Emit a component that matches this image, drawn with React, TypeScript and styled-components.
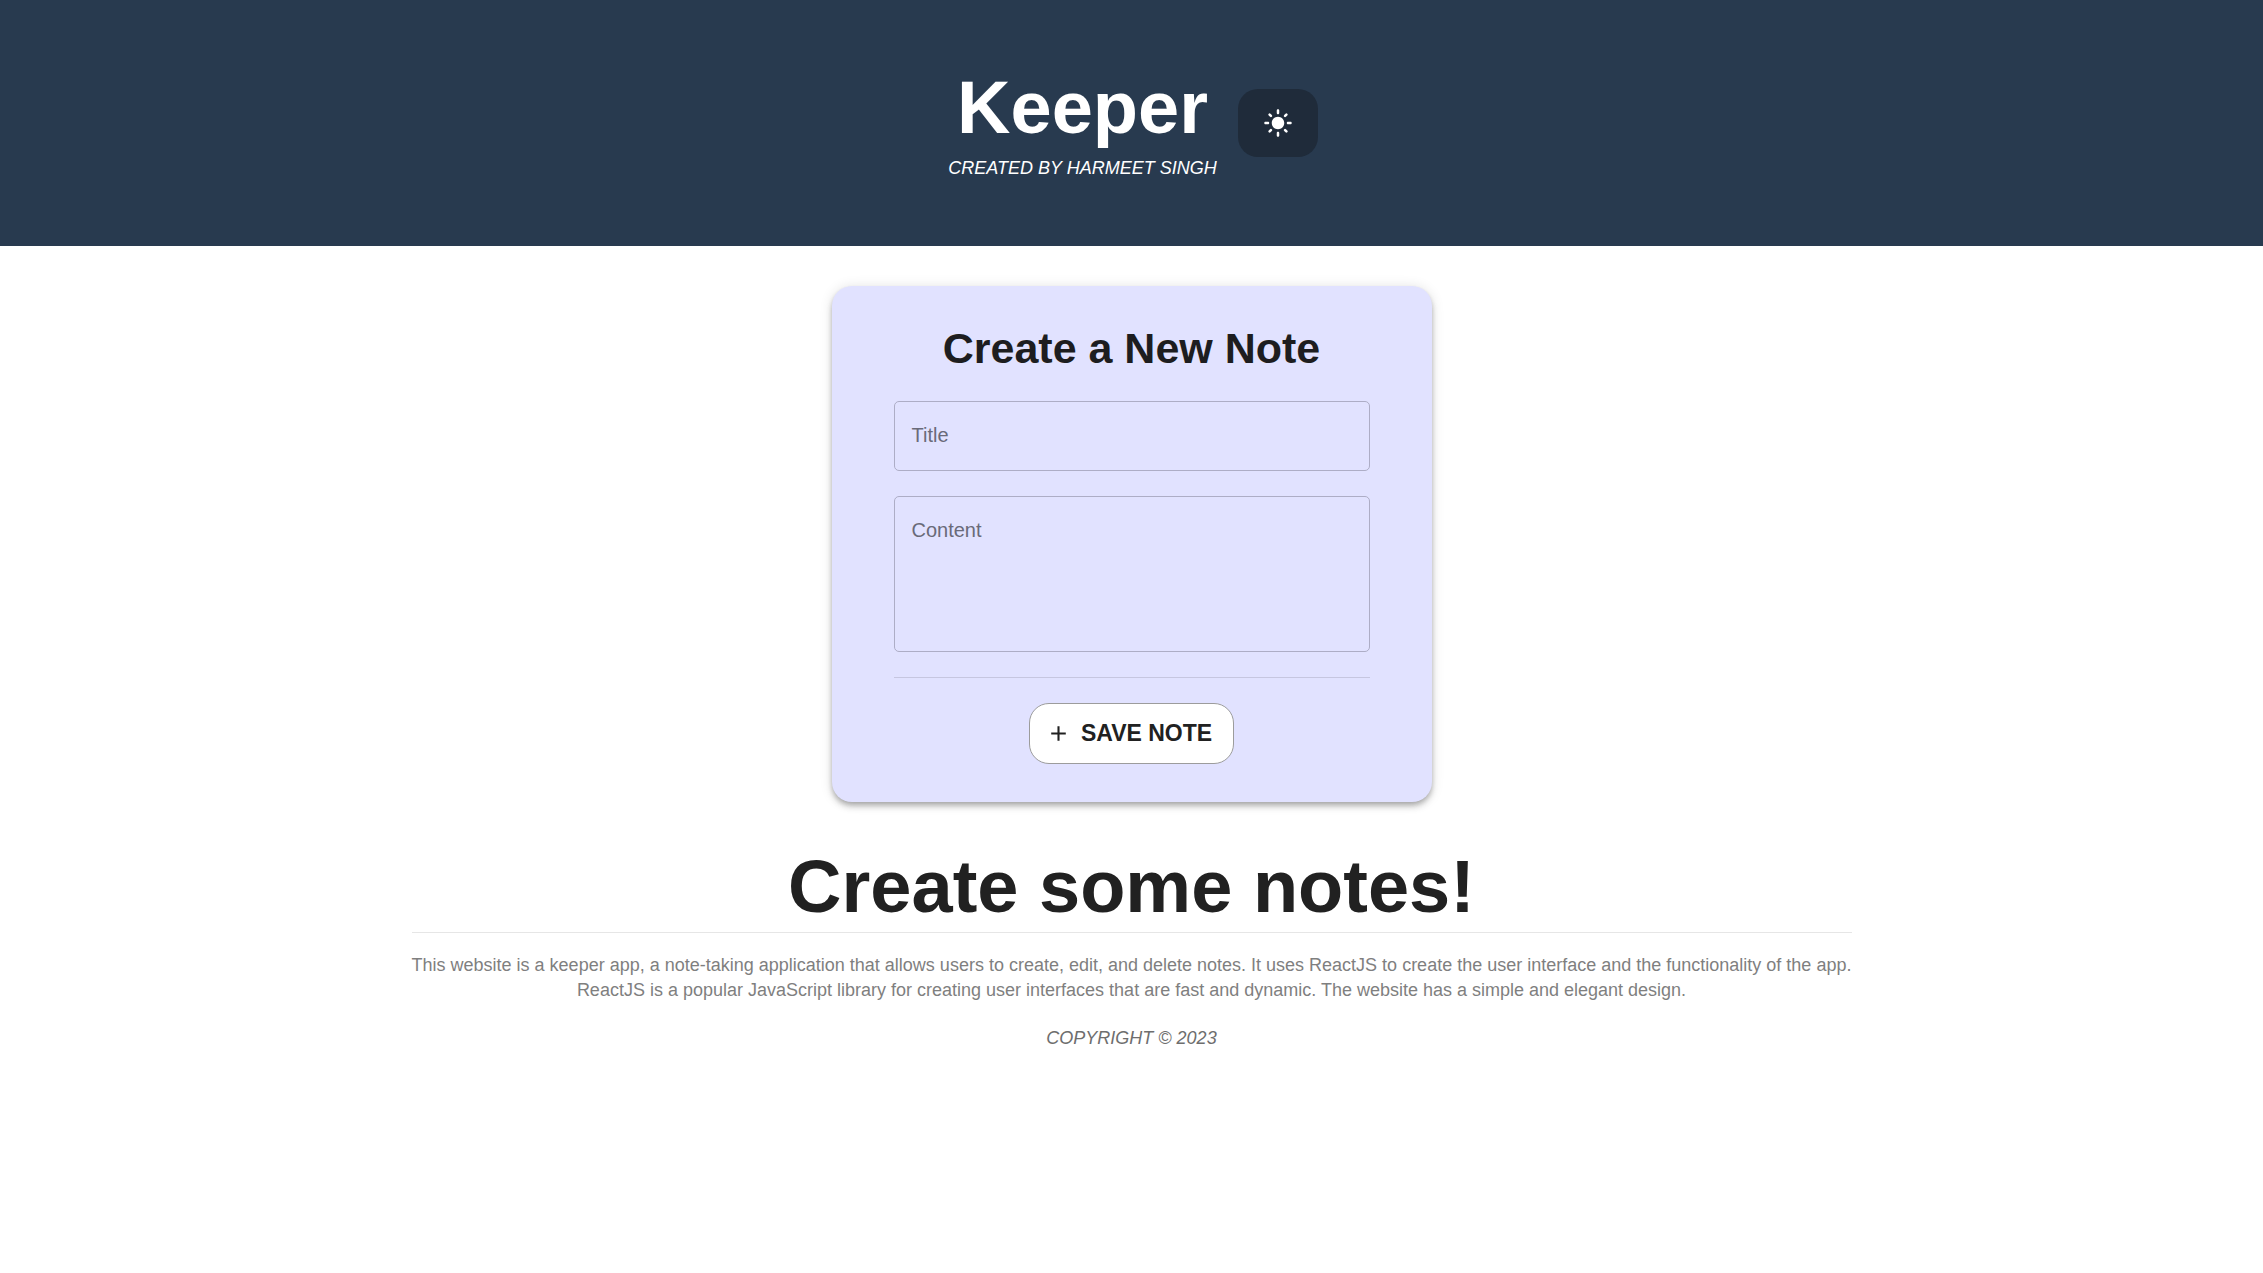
import React, { useState } from "react";
import styled, { createGlobalStyle, css } from "styled-components";
import { MdAdd, MdDarkMode, MdLightMode } from "react-icons/md";

const GlobalStyle = createGlobalStyle`
  *, *::before, *::after {
    box-sizing: border-box;
  }
  body {
    margin: 0;
    background: #fff;
    color: #212121;
    font-family: "Liberation Sans", Arial, sans-serif;
  }
`;

const Header = styled.header`
  display: flex;
  align-items: center;
  justify-content: center;
  gap: 18px;
  padding: 63px 20px;
  background: #283a4f;
  color: #fff;
`;

const Brand = styled.div`
  padding: 0 3px;
  text-align: center;
`;

const Display = styled.h1`
  margin: 0;
  font-size: 74px;
  line-height: 90px;
  font-weight: 700;
  text-align: center;
`;

const Caption = styled.p<{ $muted?: boolean }>`
  margin: 0;
  font-size: 18px;
  line-height: 30px;
  font-style: italic;
  text-align: center;
  text-transform: uppercase;
  color: ${(p) => (p.$muted ? "#6e6e6e" : "inherit")};
`;

const ThemeButton = styled.button`
  display: grid;
  place-items: center;
  width: 80px;
  height: 68px;
  padding: 0;
  border: 0;
  border-radius: 20px;
  background: #1f2b3a;
  color: #fff;
  font-size: 30px;
  cursor: pointer;
`;

const Main = styled.main`
  display: flex;
  flex-direction: column;
  align-items: center;
  gap: 40px;
  padding: 40px 20px 0;
`;

const NoteForm = styled.form`
  display: flex;
  flex-direction: column;
  align-items: center;
  gap: 25px;
  width: 100%;
  max-width: 600px;
  padding: 36px 62px 38px;
  border-radius: 20px;
  background: #e1e2ff;
  box-shadow:
    0 3px 5px -1px rgba(0, 0, 0, 0.2),
    0 5px 6px 0 rgba(0, 0, 0, 0.14),
    0 1px 13px 0 rgba(0, 0, 0, 0.12);
`;

const FormTitle = styled.h2`
  margin: 0 0 2px;
  font-size: 43px;
  line-height: 52px;
  font-weight: 700;
  color: #1d1d20;
`;

const Field = styled.div`
  display: grid;
  width: 100%;
`;

const FieldLabel = styled.label`
  grid-area: 1 / 1;
  z-index: 1;
  justify-self: start;
  padding: 19px 18px;
  font-size: 20px;
  line-height: 30px;
  color: #696a79;
  pointer-events: none;
`;

const control = css`
  grid-area: 1 / 1;
  width: 100%;
  padding: 19px 17px;
  border: 1px solid #adadc6;
  border-radius: 5px;
  background: transparent;
  color: #212121;
  font-family: inherit;
  font-size: 20px;
  line-height: 30px;
  outline: none;

  &:not(:placeholder-shown) + ${FieldLabel} {
    visibility: hidden;
  }
  &:focus {
    border-color: #283a4f;
  }
`;

const TextInput = styled.input`
  ${control}
  height: 70px;
`;

const TextArea = styled.textarea`
  ${control}
  height: 156px;
  resize: none;
`;

const Divider = styled.hr<{ $color: string }>`
  width: 100%;
  height: 1px;
  margin: 0;
  border: 0;
  background: ${(p) => p.$color};
`;

const SaveButton = styled.button`
  display: flex;
  align-items: center;
  gap: 10px;
  height: 61px;
  padding: 0 21px 0 16px;
  border: 1px solid #9c9c9c;
  border-radius: 20px;
  background: #fff;
  color: #212121;
  font-family: inherit;
  font-size: 23px;
  font-weight: 700;
  text-transform: uppercase;
  cursor: pointer;

  svg {
    font-size: 25px;
  }
`;

const Empty = styled.section`
  width: 100%;
  max-width: 1440px;
`;

const Footer = styled.footer`
  display: flex;
  flex-direction: column;
  align-items: center;
  gap: 20px;
  padding: 20px;
`;

const About = styled.p`
  max-width: 1480px;
  margin: 0;
  font-size: 18px;
  line-height: 25px;
  text-align: center;
  color: #7f7f7f;
`;

export default function App() {
  const [light, setLight] = useState(true);
  const [title, setTitle] = useState("");
  const [content, setContent] = useState("");

  return (
    <>
      <GlobalStyle />
      <Header>
        <Brand>
          <Display>Keeper</Display>
          <Caption>Created by Harmeet Singh</Caption>
        </Brand>
        <ThemeButton
          type="button"
          aria-label="Toggle theme"
          onClick={() => setLight(!light)}
        >
          {light ? <MdLightMode /> : <MdDarkMode />}
        </ThemeButton>
      </Header>
      <Main>
        <NoteForm onSubmit={(e) => e.preventDefault()}>
          <FormTitle>Create a New Note</FormTitle>
          <Field>
            <TextInput
              id="note-title"
              placeholder=" "
              value={title}
              onChange={(e) => setTitle(e.target.value)}
            />
            <FieldLabel htmlFor="note-title">Title</FieldLabel>
          </Field>
          <Field>
            <TextArea
              id="note-content"
              placeholder=" "
              value={content}
              onChange={(e) => setContent(e.target.value)}
            />
            <FieldLabel htmlFor="note-content">Content</FieldLabel>
          </Field>
          <Divider $color="#c6c6e0" />
          <SaveButton type="submit">
            <MdAdd />
            Save Note
          </SaveButton>
        </NoteForm>
        <Empty>
          <Display as="h2">Create some notes!</Display>
          <Divider $color="#e6e6e6" />
        </Empty>
      </Main>
      <Footer>
        <About>
          This website is a keeper app, a note-taking application that allows
          users to create, edit, and delete notes. It uses ReactJS to create the
          user interface and the functionality of the app. ReactJS is a popular
          JavaScript library for creating user interfaces that are fast and
          dynamic. The website has a simple and elegant design.
        </About>
        <Caption $muted>Copyright © 2023</Caption>
      </Footer>
    </>
  );
}
